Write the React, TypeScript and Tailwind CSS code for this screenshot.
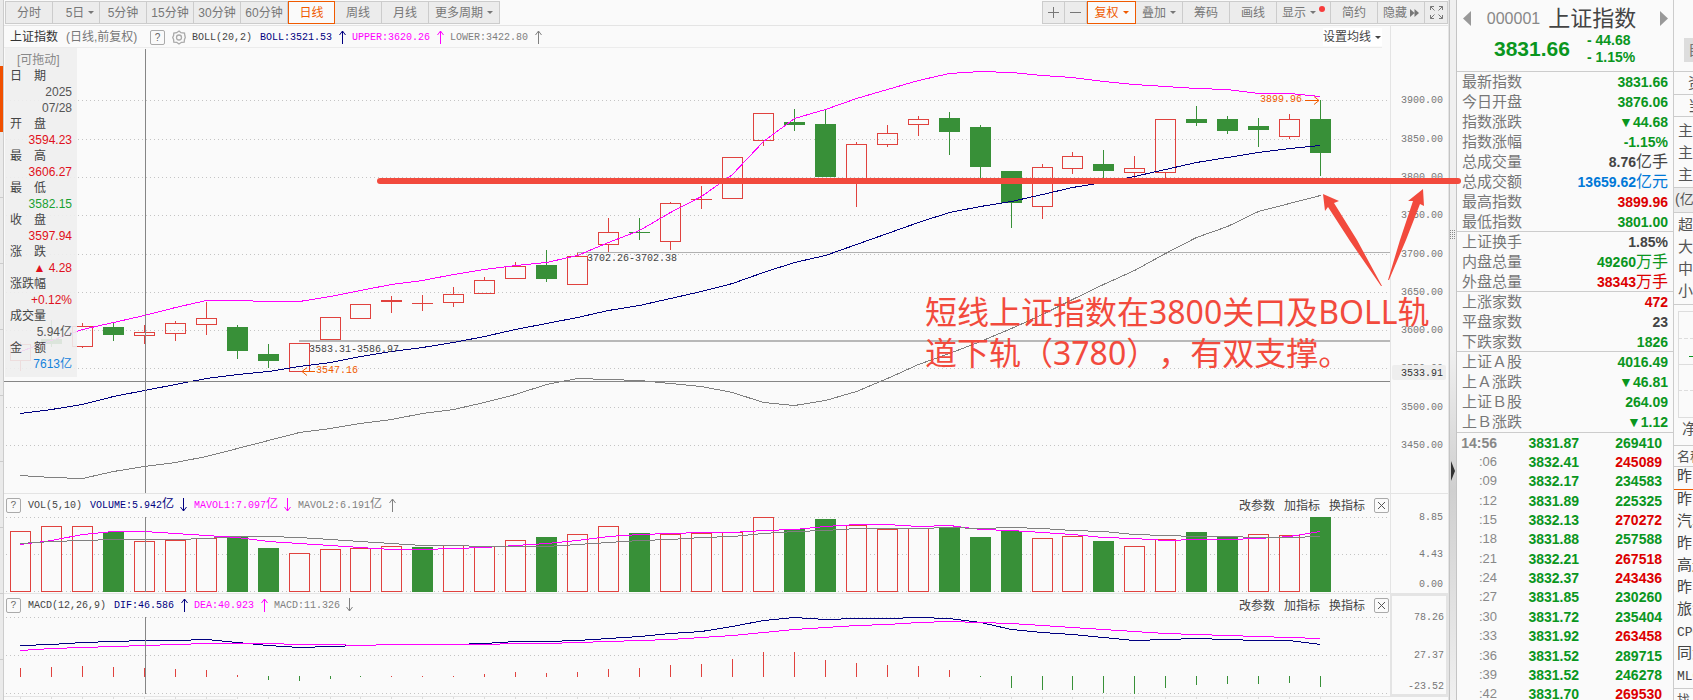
import clsx from 'clsx';

type Candle = [up: boolean, top: number, bottom: number, high: number, low: number];

// first candle, spacing and the two places where the spacing drops a pixel
const candleX = (i: number) => 20 + i * 31 - (i > 10 ? 1 : 0) - (i > 33 ? 1 : 0);

const CANDLES: Candle[] = [
  [true, 344, 360, 342, 371], [false, 339, 344, 320, 347], [true, 326, 346, 323, 348],
  [false, 327, 335, 322, 341], [true, 332, 335, 325, 344], [true, 323, 333, 321, 341],
  [true, 318, 324, 302, 335], [false, 327, 351, 325, 359], [false, 354, 361, 344, 368],
  [true, 343, 371, 343, 371], [true, 317, 339, 317, 339], [true, 304, 318, 304, 318],
  [true, 300, 301, 296, 313], [true, 303, 303, 295, 311], [true, 294, 302, 287, 307],
  [true, 280, 293, 277, 293], [true, 266, 278, 262, 278], [false, 265, 279, 250, 282],
  [true, 256, 284, 252, 284], [true, 232, 244, 218, 252], [false, 232, 233, 218, 240],
  [true, 203, 241, 202, 250], [true, 199, 199, 186, 209], [true, 157, 198, 157, 198],
  [true, 113, 140, 113, 146], [false, 122, 125, 109, 131], [false, 124, 177, 109, 177],
  [true, 144, 180, 142, 207], [true, 133, 144, 125, 147], [true, 119, 124, 116, 136],
  [false, 118, 132, 112, 155], [false, 127, 167, 125, 178], [false, 171, 203, 171, 228],
  [true, 167, 206, 164, 219], [true, 156, 168, 152, 174], [false, 164, 171, 150, 178],
  [true, 168, 172, 156, 178], [true, 119, 172, 119, 178], [false, 119, 123, 106, 126],
  [false, 119, 131, 116, 134], [false, 126, 130, 118, 147], [true, 119, 136, 114, 139],
  [false, 119, 153, 100, 176],
];

const UPPER = [351, 340, 329, 322, 315, 307, 300, 300, 301, 301, 296, 290, 284, 280, 274, 269, 265, 262, 255, 242, 230, 212, 196, 174, 141, 118, 109, 98, 89, 80, 73, 71, 72, 75, 77, 81, 84, 86, 88, 89, 93, 93, 96];
const MIDDLE = [413, 409, 404, 396, 390, 384, 378, 374, 371, 366, 362, 356, 351, 347, 342, 336, 329, 323, 317, 310, 305, 298, 291, 283, 272, 262, 255, 244, 233, 222, 212, 206, 201, 194, 187, 182, 176, 169, 162, 157, 152, 148, 145];
const LOWER = [475, 477, 478, 471, 466, 462, 456, 448, 440, 432, 428, 423, 419, 413, 409, 402, 394, 384, 378, 379, 380, 383, 386, 392, 402, 405, 400, 391, 378, 364, 353, 341, 328, 314, 299, 284, 270, 253, 237, 226, 211, 203, 195];

const VOLUME = [531, 526, 526, 532, 541, 540, 538, 537, 548, 553, 549, 548, 546, 547, 545, 546, 540, 537, 534, 526, 533, 534, 533, 532, 517, 529, 519, 525, 529, 528, 527, 537, 531, 538, 536, 541, 546, 539, 532, 537, 534, 535, 517];
const VOLUME_DOWN = [3, 7, 8, 13, 17, 20, 25, 26, 30, 31, 32, 35, 38, 39, 42];
const MAVOL1 = [544, 540, 534, 531, 531, 533, 535, 537, 541, 543, 545, 547, 549, 549, 548, 547, 545, 543, 540, 536, 534, 533, 532, 532, 530, 529, 526, 524, 524, 526, 525, 529, 530, 532, 534, 537, 538, 540, 539, 539, 538, 536, 531];
const MAVOL2 = [543, 541, 540, 539, 539, 539, 538, 536, 536, 537, 539, 541, 543, 545, 545, 546, 546, 546, 544, 542, 540, 539, 537, 536, 533, 531, 530, 528, 528, 528, 527, 528, 527, 528, 530, 531, 534, 535, 536, 536, 537, 537, 536];

const DIF = [645, 644, 642, 641, 640, 640, 639, 642, 645, 647, 646, 645, 644, 644, 644, 643, 641, 641, 640, 638, 636, 633, 631, 626, 620, 617, 619, 618, 618, 617, 618, 622, 629, 632, 634, 637, 640, 639, 638, 639, 640, 640, 644];
const DEA = [650, 648, 647, 646, 645, 644, 643, 643, 643, 644, 644, 645, 644, 644, 644, 644, 643, 643, 642, 641, 640, 639, 637, 635, 632, 629, 627, 625, 624, 622, 621, 622, 623, 625, 627, 629, 631, 633, 634, 635, 636, 637, 638];
const HISTOGRAM = [-9, -10, -11, -10, -9, -8, -7, -2, 4, 5, 3, 1, -1, -1, -1, -3, -5, -4, -5, -8, -9, -12, -13, -18, -25, -25, -17, -14, -12, -11, -7, 1, 12, 14, 14, 17, 18, 12, 9, 8, 8, 7, 11];

const RED = '#e0423e';
const GREEN = '#389038';

const QUOTES: [string, string, string, string?][][] = [
  [
    ['最新指数', '3831.66', 'text-[#0a961e]'],
    ['今日开盘', '3876.06', 'text-[#0a961e]'],
    ['指数涨跌', '▼44.68', 'text-[#0a961e]'],
    ['指数涨幅', '-1.15%', 'text-[#0a961e]'],
    ['总成交量', '8.76', 'text-[#444]', '亿手'],
    ['总成交额', '13659.62', 'text-[#0078d7]', '亿元'],
    ['最高指数', '3899.96', 'text-[#dc0000]'],
    ['最低指数', '3801.00', 'text-[#0a961e]'],
  ],
  [
    ['上证换手', '1.85%', 'text-[#444]'],
    ['内盘总量', '49260', 'text-[#0a961e]', '万手'],
    ['外盘总量', '38343', 'text-[#dc0000]', '万手'],
  ],
  [
    ['上涨家数', '472', 'text-[#dc0000]'],
    ['平盘家数', '23', 'text-[#444]'],
    ['下跌家数', '1826', 'text-[#0a961e]'],
  ],
  [
    ['上证Ａ股', '4016.49', 'text-[#0a961e]'],
    ['上Ａ涨跌', '▼46.81', 'text-[#0a961e]'],
    ['上证Ｂ股', '264.09', 'text-[#0a961e]'],
    ['上Ｂ涨跌', '▼1.12', 'text-[#0a961e]'],
  ],
];

const TICKS: [string, string, string, boolean][] = [
  ['14:56', '3831.87', '269410', false],
  [':06', '3832.41', '245089', true],
  [':09', '3832.17', '234583', false],
  [':12', '3831.89', '225325', false],
  [':15', '3832.13', '270272', true],
  [':18', '3831.88', '257588', false],
  [':21', '3832.21', '267518', true],
  [':24', '3832.37', '243436', true],
  [':27', '3831.85', '230260', false],
  [':30', '3831.72', '235404', false],
  [':33', '3831.92', '263458', true],
  [':36', '3831.52', '289715', false],
  [':39', '3831.52', '246278', false],
  [':42', '3831.70', '269530', true],
];

const DAY_INFO: [string, string[], string][] = [
  ['日　期', ['2025', '07/28'], 'text-[#555]'],
  ['开　盘', ['3594.23'], 'text-[#e01020]'],
  ['最　高', ['3606.27'], 'text-[#e01020]'],
  ['最　低', ['3582.15'], 'text-[#1aa032]'],
  ['收　盘', ['3597.94'], 'text-[#e01020]'],
  ['涨　跌', ['▲ 4.28'], 'text-[#e01020]'],
  ['涨跌幅', ['+0.12%'], 'text-[#e01020]'],
  ['成交量', ['5.94亿'], 'text-[#555]'],
  ['金　额', ['7613亿'], 'text-[#1482dc]'],
];

const Line = ({ ys, color }: { ys: number[]; color: string }) => (
  <polyline
    points={ys.map((y, i) => `${candleX(i) + 0.5},${y + 0.5}`).join(' ')}
    fill="none"
    stroke={color}
    shapeRendering="crispEdges"
  />
);

const GridLines = ({ ys }: { ys: number[] }) => (
  <>
    {ys.map((y) => (
      <line key={y} x1="6" x2="101%" y1={y + 0.5} y2={y + 0.5} stroke="#c4c4c4" strokeDasharray="1 3" />
    ))}
  </>
);

const Arrow = ({ down, color }: { down?: boolean; color: string }) => (
  <svg width="20" height="14" viewBox="0 0 20 14" fill="none" stroke={color} className={clsx('shrink-0', down && 'rotate-180')}>
    <path d="M10.5 14V1M7.5 5l3-4 3 4" />
  </svg>
);

const Caret = () => (
  <svg width="6" height="3" viewBox="0 0 6 3" fill="currentColor" className="ml-1 shrink-0">
    <path d="M0 0h6L3 3z" />
  </svg>
);

const Help = () => (
  <button className="mr-[7px] h-[15px] w-[15px] shrink-0 rounded-xs border border-[#aaa] text-center text-[10px] leading-[13px] text-[#666]">
    ?
  </button>
);

const Tool = ({ width, active, children }: { width: string; active?: boolean; children: React.ReactNode }) => (
  <button
    className={clsx(
      'flex h-full items-center justify-center whitespace-nowrap',
      width,
      active
        ? 'border border-[#f05a00] bg-[#fafafa] text-[#f05a00]'
        : 'border-y border-r border-[#ccc] bg-[#ececec] text-[#777]',
    )}
  >
    {children}
  </button>
);

const Axis = ({ top, height, labels, children }: { top: number; height: string; labels: [string, number][]; children?: React.ReactNode }) => (
  <svg className={clsx('block w-full text-[10px]', height)}>
    <g transform={`translate(0 ${-top})`} fill="#777" textAnchor="end" className="[font-family:'Liberation_Mono',monospace]">
      {labels.map(([text, y]) => (
        <text key={text} x="52" y={y + 3}>{text}</text>
      ))}
      {children}
    </g>
  </svg>
);

const PanelActions = () => (
  <div className="ml-auto flex items-center gap-[9px] [font-family:'Noto_Sans_CJK_SC',sans-serif] text-[12px] text-[#444]">
    <button>改参数</button>
    <button>加指标</button>
    <button>换指标</button>
    <button aria-label="关闭" className="flex h-[15px] w-[15px] items-center justify-center rounded-xs border border-[#aaa]">
      <svg width="7" height="7" viewBox="0 0 7 7" stroke="#555">
        <path d="M0 0l7 7M7 0L0 7" />
      </svg>
    </button>
  </div>
);

const Toolbar = () => (
  <div className="flex h-[26px] justify-between border-b border-[#e4e4e4] pt-px pb-px pl-px text-[12px]">
    <div className="flex border-l border-[#ccc]">
      <Tool width="w-[47px]">分时</Tool>
      <Tool width="w-[47px]"><span className="pl-2">5日</span><Caret /></Tool>
      <Tool width="w-[47px]">5分钟</Tool>
      <Tool width="w-[47px]">15分钟</Tool>
      <Tool width="w-[47px]">30分钟</Tool>
      <Tool width="w-[47px]">60分钟</Tool>
      <Tool width="w-[47px]" active>日线</Tool>
      <Tool width="w-[47px]">周线</Tool>
      <Tool width="w-[47px]">月线</Tool>
      <Tool width="w-[71px]">更多周期<Caret /></Tool>
    </div>
    <div className="flex border-l border-[#ccc]">
      <Tool width="w-[22px]">
        <svg width="11" height="11" viewBox="0 0 11 11" stroke="currentColor"><path d="M0 5.500h11M5.500 0v11" /></svg>
      </Tool>
      <Tool width="w-[22px]">
        <svg width="11" height="11" viewBox="0 0 11 11" stroke="currentColor"><path d="M0 5.500h11" /></svg>
      </Tool>
      <Tool width="w-[49px]" active>复权<Caret /></Tool>
      <Tool width="w-[47px]">叠加<Caret /></Tool>
      <Tool width="w-[47px]">筹码</Tool>
      <Tool width="w-[47px]">画线</Tool>
      <Tool width="w-[54px]">
        显示<Caret />
        <span className="mb-2 ml-[3px] h-[6px] w-[6px] rounded-full bg-[#f83c3c]" />
      </Tool>
      <Tool width="w-[47px]">简约</Tool>
      <Tool width="w-[47px]">
        隐藏
        <svg width="9" height="8" viewBox="0 0 9 8" fill="currentColor" className="ml-[3px]"><path d="M0 0l4.500 4L0 8zM4.500 0L9 4 4.500 8z" /></svg>
      </Tool>
      <Tool width="w-[23px]">
        <svg width="13" height="13" viewBox="0 0 13 13" fill="none" stroke="currentColor">
          <path d="M.5 4V.5H4M.5.5l4 4M9 .5h3.500V4M12.500.5l-4 4M.5 9v3.500H4M.5 12.500l4-4M9 12.500h3.500V9M12.500 12.500l-4-4" />
        </svg>
      </Tool>
    </div>
  </div>
);

const DayInfo = () => (
  <div className="absolute top-0 left-px h-[329px] w-[72px] bg-[#eee]/90 pt-1 pr-[5px] pl-[5px] text-[12px] leading-[16px]">
    <div className="pl-[7px] text-[#888]">[可拖动]</div>
    {DAY_INFO.map(([label, values, color]) => (
      <div key={label}>
        <div className="text-[#444]">{label}</div>
        {values.map((value) => (
          <div key={value} className={clsx('text-right', color)}>{value}</div>
        ))}
      </div>
    ))}
  </div>
);

const PricePanel = () => (
  <section className="flex">
    <div className="relative min-w-0 flex-1">
      <div className="mr-[8px] flex h-[22px] items-center border-b border-[#ececec] pt-px pl-[6px] text-[12px]">
        <span className="text-[#333]">上证指数</span>
        <span className="ml-2 w-[84px] whitespace-nowrap text-[#777]">(日线,前复权)</span>
        <Help />
        <svg width="14" height="15" viewBox="0 0 14 15" fill="none" stroke="#aaa" strokeWidth="1.300" className="mr-[6px]">
          <path d="M7 1l2 1.700 3.500.3.300 2.500L13.300 7.500l-.8 2-.3 2.600-2.700.2L7 14l-2.300-1.700-2.900-.2-.2-2.600-.9-2 .9-2L1.800 3l2.900-.3z" />
          <circle cx="7" cy="7.500" r="2.500" />
        </svg>
        <div className="flex items-center [font-family:'Liberation_Mono',monospace] text-[10px] whitespace-nowrap">
          <span className="mr-2 text-[#444]">BOLL(20,2)</span>
          <span className="text-[#000080]">BOLL:3521.53</span>
          <Arrow color="#000080" />
          <span className="text-[#f0f]">UPPER:3620.26</span>
          <Arrow color="#f0f" />
          <span className="text-[#808080]">LOWER:3422.80</span>
          <Arrow color="#808080" />
        </div>
        <button className="ml-auto flex items-center bg-white pr-px text-[#444]">设置均线<Caret /></button>
      </div>
      <div className="relative">
        <svg className="block h-[445px] w-full">
          <g transform="translate(-4 -48)">
            <GridLines ys={[100, 139, 177, 215, 254, 292, 330, 368, 407, 445]} />
            {CANDLES.map(([up, top, bottom, high, low], i) => {
              const x = candleX(i);
              return up ? (
                <path
                  key={i}
                  d={`M${x + 0.5} ${high}V${top}M${x + 0.5} ${bottom}V${low}M${x - 10} ${top + 0.5}h21M${x - 10} ${bottom + 0.5}h21M${x - 9.5} ${top}V${bottom + 1}M${x + 10.5} ${top}V${bottom + 1}`}
                  fill="none"
                  stroke={RED}
                />
              ) : (
                <g key={i} fill={GREEN}>
                  <rect x={x} y={high} width="1" height={low - high} />
                  <rect x={x - 10} y={top} width="21" height={bottom - top} />
                </g>
              );
            })}
            <line x1="299" x2="101%" y1="341" y2="341" stroke="#b8b8b8" strokeWidth="2" />
            <line x1="577" x2="101%" y1="252.500" y2="252.500" stroke="#b0b0b0" />
            <Line ys={UPPER} color="#ff00ff" />
            <Line ys={MIDDLE} color="#000080" />
            <Line ys={LOWER} color="#808080" />
            <line x1="0" x2="101%" y1="381.500" y2="381.500" stroke="#868686" />
            <path d="M145.500 49V493" stroke="#868686" />
            <g className="[font-family:'Liberation_Mono',monospace] text-[10px]" fill="#444">
              <text x="309" y="352">3583.31-3586.97</text>
              <text x="587" y="261">3702.26-3702.38</text>
              <g fill="#f05a00">
                <text x="316" y="373">3547.16</text>
                <text x="1260" y="102">3899.96</text>
              </g>
            </g>
            <path d="M315 371.500H302M307 367.500l-5 4 5 4M1305 100.500H1319M1314 96.500l5 4-5 4" fill="none" stroke="#f05a00" />
          </g>
        </svg>
        <DayInfo />
      </div>
    </div>
    <div className="w-[58px] border-l border-[#e4e4e4]">
      <Axis
        top={26}
        height="h-[467px]"
        labels={[
          ['3900.00', 100], ['3850.00', 139], ['3800.00', 177], ['3750.00', 215], ['3700.00', 254],
          ['3650.00', 292], ['3600.00', 330], ['3550.00', 368], ['3500.00', 407], ['3450.00', 445],
        ]}
      >
        <rect x="1" y="365" width="54" height="15" rx="2" fill="#eee" />
        <text x="52" y="376" fill="#333">3533.91</text>
      </Axis>
    </div>
  </section>
);

const VolumePanel = () => (
  <section className="flex border-t border-[#e4e4e4]">
    <div className="min-w-0 flex-1">
      <div className="flex h-[22px] items-center pr-px pl-[2px] [font-family:'Liberation_Mono','Noto_Sans_CJK_SC',monospace] text-[10px] whitespace-nowrap">
        <Help />
        <span className="mr-2 text-[#444]">VOL(5,10)</span>
        <span className="text-[#000080]">VOLUME:5.942<span className="text-[12px]">亿</span></span>
        <Arrow down color="#000080" />
        <span className="text-[#f0f]">MAVOL1:7.097<span className="text-[12px]">亿</span></span>
        <Arrow down color="#f0f" />
        <span className="text-[#808080]">MAVOL2:6.191<span className="text-[12px]">亿</span></span>
        <Arrow color="#808080" />
        <PanelActions />
      </div>
      <svg className="block h-[77px] w-full">
        <g transform="translate(-4 -516)">
          <GridLines ys={[517, 554, 591]} />
          {VOLUME.map((y, i) =>
            VOLUME_DOWN.includes(i) ? (
              <rect key={i} x={candleX(i) - 10} y={y} width="21" height={592 - y} fill={GREEN} />
            ) : (
              <rect key={i} x={candleX(i) - 9.5} y={y + 0.5} width="20" height={591 - y} fill="#fafafa" stroke={RED} />
            ),
          )}
          <Line ys={MAVOL1} color="#ff00ff" />
          <Line ys={MAVOL2} color="#808080" />
          <path d="M145.500 517V592" stroke="#868686" />
        </g>
      </svg>
    </div>
    <div className="w-[58px] border-l border-[#e4e4e4]">
      <Axis top={494} height="h-[99px]" labels={[['8.85', 517], ['4.43', 554], ['0.00', 584]]} />
    </div>
  </section>
);

const MacdPanel = () => (
  <section className="flex border-t border-[#e4e4e4]">
    <div className="min-w-0 flex-1">
      <div className="flex h-[22px] items-center pr-px pl-[2px] [font-family:'Liberation_Mono',monospace] text-[10px] whitespace-nowrap">
        <Help />
        <span className="mr-2 text-[#444]">MACD(12,26,9)</span>
        <span className="text-[#000080]">DIF:46.586</span>
        <Arrow color="#000080" />
        <span className="text-[#f0f]">DEA:40.923</span>
        <Arrow color="#f0f" />
        <span className="text-[#808080]">MACD:11.326</span>
        <Arrow down color="#808080" />
        <PanelActions />
      </div>
      <svg className="block h-[80px] w-full">
        <g transform="translate(-4 -616)">
          <GridLines ys={[617, 655, 693]} />
          {HISTOGRAM.map((value, i) => (
            <rect
              key={i}
              x={candleX(i)}
              y={value < 0 ? 677 + value : 676}
              width="1"
              height={Math.abs(value)}
              fill={value < 0 ? RED : GREEN}
            />
          ))}
          <Line ys={DIF} color="#000080" />
          <Line ys={DEA} color="#ff00ff" />
          <path d="M145.500 617V694" stroke="#868686" />
        </g>
      </svg>
    </div>
    <div className="w-[58px] border-2 border-[#e4e4e4]">
      <Axis top={596} height="h-[98px]" labels={[['78.26', 617], ['27.37', 655], ['-23.52', 686]]} />
    </div>
  </section>
);

const TimeTicks = () => (
  <svg className="block h-[4px] w-full border-t border-[#e4e4e4]">
    {CANDLES.map((_, i) => (
      <rect key={i} x={candleX(i) - 4} y="0" width="1" height="2" fill="#ddd" />
    ))}
    <rect x="142" y="2" width="90" height="2" fill="#eee" />
  </svg>
);

// hand-drawn support line, arrows and comment over the chart
const Annotation = () => (
  <>
    <svg className="pointer-events-none absolute top-0 left-0 h-[300px] w-[1470px]" fill="#f24a3d">
      <rect x="377" y="178" width="1084" height="6" rx="3" />
      <path d="M1323 194L1339 201 1334 203 1357 240 1382 286 1381 286 1350 241 1328 207 1325 211z" />
      <path d="M1423 189L1408 201 1413 201 1400 240 1388 280 1389 280 1406 240 1420 204 1424 206z" />
    </svg>
    <p className="pointer-events-none absolute top-[291px] left-[925px] w-[520px] [font-family:'Noto_Sans','Noto_Sans_CJK_SC',sans-serif] text-[32px] leading-[41px] whitespace-nowrap text-[#f24a3d] [text-spacing-trim:space-all]">
      短线上证指数在3800关口及BOLL轨
      <br />
      道下轨（3780），有双支撑。
    </p>
  </>
);

const QuotePanel = () => (
  <aside className="w-[217px] shrink-0 overflow-hidden border-r border-[#ccc]">
    <div className="h-[71px] pt-[5px]">
      <div className="flex h-[27px] items-center justify-between pr-[5px] pl-[6px]">
        <button aria-label="上一个">
          <svg width="8" height="15" viewBox="0 0 8 15" fill="#999"><path d="M8 0v15L0 7.500z" /></svg>
        </button>
        <h1 className="flex items-center gap-2">
          <span className="text-[16px] text-[#888]">000001</span>
          <span className="text-[22px] leading-[27px] text-[#444]">上证指数</span>
        </h1>
        <button aria-label="下一个" className="ml-[8px]">
          <svg width="8" height="15" viewBox="0 0 8 15" fill="#999"><path d="M0 0v15l8-7.500z" /></svg>
        </button>
      </div>
      <div className="flex items-center pl-[37px] font-bold text-[#0a961e]">
        <span className="w-[93px] text-[21px]">3831.66</span>
        <span className="text-[14px] leading-[17px]">- 44.68<br />- 1.15%</span>
      </div>
    </div>
    {QUOTES.map((group, i) => (
      <dl key={i} className={clsx('border-t border-[#ccc] pr-[5px] pl-[5px]', i > 0 && '-mt-px')}>
        {group.map(([label, value, color, unit]) => (
          <div key={label} className="flex h-[20px] items-center justify-between leading-[20px]">
            <dt className="text-[15px] text-[#777]">{label}</dt>
            <dd className={clsx('text-[14px] font-bold', color)}>
              {value}
              {unit && <span className="text-[16px] font-normal">{unit}</span>}
            </dd>
          </div>
        ))}
      </dl>
    ))}
    <table className="h-[272px] w-full border-t border-[#ccc] text-[14px] leading-[18px] font-bold">
      <tbody>
        {TICKS.map(([time, price, volume, up], i) => (
          <tr key={time}>
            <td className={clsx('w-[40px] p-0 text-right text-[#888]', i > 0 && 'text-[13px] font-normal')}>{time}</td>
            <td className="p-0 text-right text-[#0a961e]">{price}</td>
            <td className={clsx('w-[94px] p-0 pr-[11px] text-right', up ? 'text-[#dc0000]' : 'text-[#0a961e]')}>{volume}</td>
          </tr>
        ))}
      </tbody>
    </table>
  </aside>
);

const SideColumn = () => (
  <aside className="w-[19px] shrink-0 overflow-hidden text-[15px] leading-[22px] whitespace-nowrap text-[#555]">
    <div className="h-[71px] pt-[38px] pl-[10px]">
      <button className="h-[24px] w-[40px] bg-[#ddd] pl-1 text-left text-[#777]">自选</button>
    </div>
    <div className="h-[23px] border-t border-[#ccc] pl-[14px]">资金</div>
    <div className="h-[22px] border-t border-[#ccc] pl-[14px]">当日</div>
    <div className="h-[71px] border-t border-[#ccc] pt-[3px] pl-1">
      <div>主力</div>
      <div>主力</div>
      <div>主力</div>
    </div>
    <div className="h-[26px] border-y border-[#ccc] bg-[#ececec] pl-px text-[14px]">(亿元)</div>
    <div className="h-[91px] pt-px pl-1">
      <div>超大</div>
      <div>大单</div>
      <div>中单</div>
      <div>小单</div>
    </div>
    <div className="h-[141px] border-t border-[#ccc] pt-[6px] pl-1">
      <svg width="100" height="107" viewBox="0 0 100 107" fill="none" stroke="#ddd">
        <rect x="0.500" y="0.500" width="99" height="106" />
        <path d="M0 27.500H100M0 79.500H100" strokeDasharray="4 2" />
        <path d="M0 53.500H100" />
        <path d="M11 45.500H30" stroke="#0a961e" />
      </svg>
      <div className="pl-1">净流</div>
    </div>
    <div className="h-[22px] border-y border-[#ccc] text-[13px]"><span className="pl-[3px]">名称</span></div>
    <ul className="[font-family:'Liberation_Mono','Noto_Sans_CJK_SC',monospace] pl-[3px] text-[#444]">
      <li className="-ml-[3px] border-b border-[#f05a00] pl-[3px]">昨日</li>
      <li>昨日</li>
      <li>汽车</li>
      <li>昨日</li>
      <li>高送</li>
      <li>昨日</li>
      <li>旅游</li>
      <li className="text-[13px]">CPO</li>
      <li>同步</li>
      <li className="text-[13px]">MLCC</li>
    </ul>
    <div className="border-t border-[#ccc] pl-[3px] text-[13px]">找</div>
  </aside>
);

const App: React.FC = () => {
  return (
    <div className="relative flex h-screen overflow-hidden bg-[#fafafa] [font-family:'Liberation_Sans','Noto_Sans_CJK_SC',sans-serif]">
      {/* collapsed page tabs on the left edge */}
      <nav className="w-[4px] shrink-0 border-r border-[#ccc] bg-[#eaeaea]">
        <div className="h-[66px]" />
        <div className="h-[66px] bg-[#f05000]" />
        {[0, 1, 2, 3, 4, 5, 6, 7].map((tab) => (
          <div key={tab} className="h-[66px] border-b border-[#ccc]" />
        ))}
      </nav>

      <main className="min-w-0 flex-1 border-r border-[#e4e4e4]">
        <Toolbar />
        <PricePanel />
        <VolumePanel />
        <MacdPanel />
        <TimeTicks />
      </main>

      {/* splitter */}
      <div className="flex w-[8px] shrink-0 flex-col items-center border-x border-[#c4c4c4] bg-linear-to-b from-[#f0f0f0] from-50% via-[#cfcfcf] via-70% to-[#f0f0f0]">
        <svg width="6" height="10" viewBox="0 0 6 10" fill="#888" className="mt-[230px]">
          {[0, 2, 4, 6, 8].map((y) => (
            <path key={y} d={`M0 ${y}h1v1h-1zM2 ${y}h1v1h-1zM4 ${y}h1v1h-1z`} />
          ))}
        </svg>
        <svg width="4" height="20" viewBox="0 0 4 20" fill="#333" className="mt-[221px]">
          <path d="M0 0l4 10-4 10z" />
        </svg>
      </div>

      <QuotePanel />
      <SideColumn />
      <Annotation />
    </div>
  );
};

export default App;
